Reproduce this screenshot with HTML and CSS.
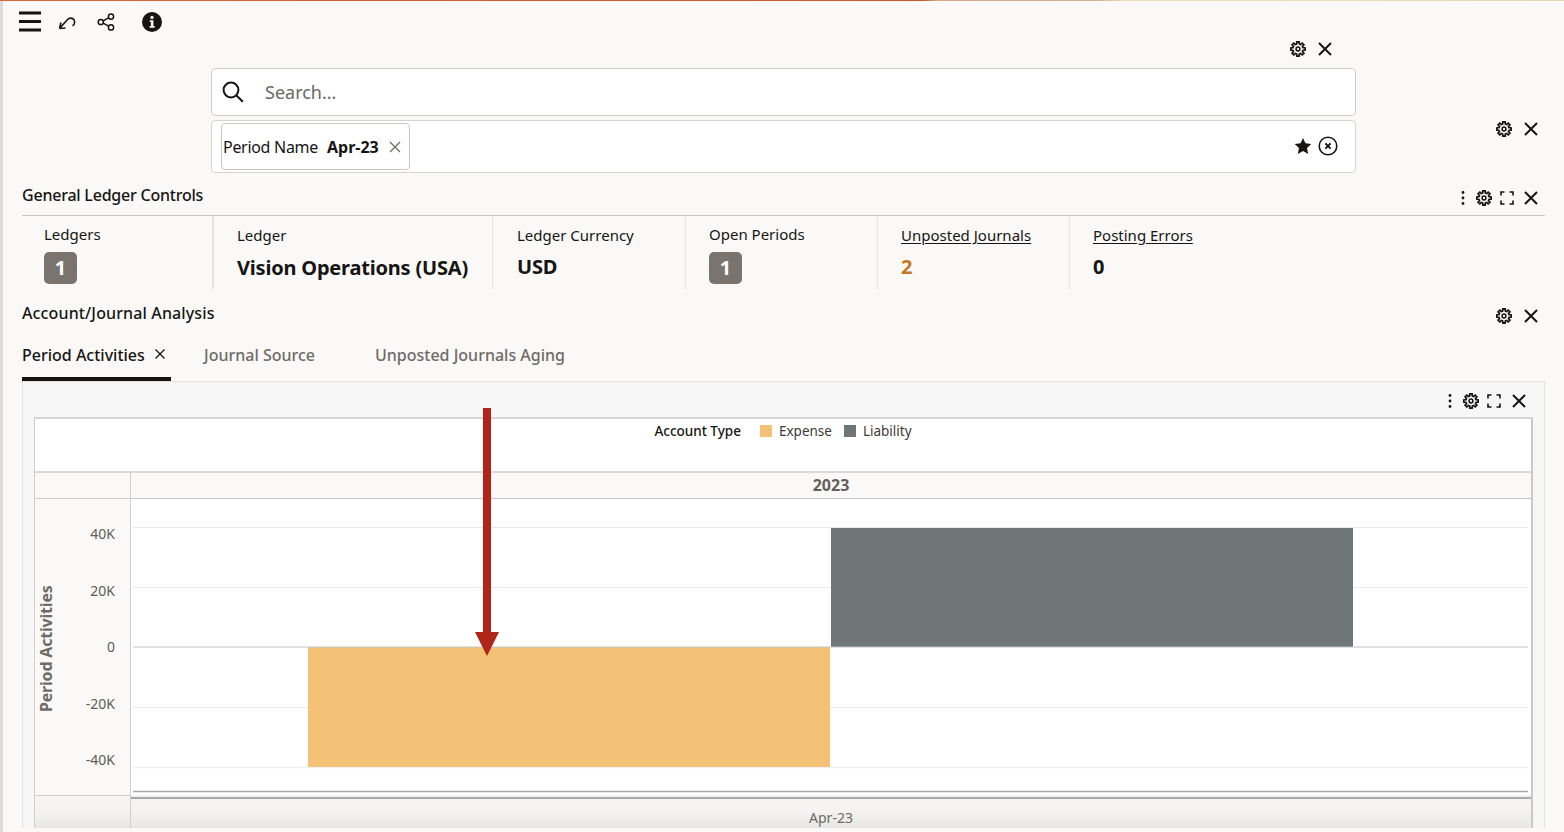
FILE: index.html
```html
<!DOCTYPE html>
<html lang="en">
<head>
<meta charset="utf-8">
<title>General Ledger Controls</title>
<link rel="stylesheet" href="styles.css">
</head>
<body>
<svg class="defs" width="0" height="0" aria-hidden="true">
  <symbol id="i-gear" viewBox="0 0 16 16">
    <path fill="none" stroke="currentColor" stroke-width="1.7" stroke-linejoin="round" d="M6.74 2.95 6.73.81H9.27L9.26 2.95 10.68 3.54 12.19 2.02 13.98 3.81 12.46 5.32 13.05 6.74 15.19 6.73V9.27L13.05 9.26 12.46 10.68 13.98 12.19 12.19 13.98 10.68 12.46 9.26 13.05 9.27 15.19H6.73L6.74 13.05 5.32 12.46 3.81 13.98 2.02 12.19 3.54 10.68 2.95 9.26 .81 9.27V6.73L2.95 6.74 3.54 5.32 2.02 3.81 3.81 2.02 5.32 3.54Z"/>
    <circle cx="8" cy="8" r="1.9" fill="none" stroke="currentColor" stroke-width="1.5"/>
  </symbol>
  <symbol id="i-x" viewBox="0 0 18 18">
    <path fill="none" stroke="currentColor" stroke-width="2" d="M3 3 15 15M15 3 3 15"/>
  </symbol>
  <symbol id="i-kebab" viewBox="0 0 10 16">
    <circle cx="5" cy="2.5" r="1.4" fill="currentColor"/>
    <circle cx="5" cy="8" r="1.4" fill="currentColor"/>
    <circle cx="5" cy="13.5" r="1.4" fill="currentColor"/>
  </symbol>
  <symbol id="i-expand" viewBox="0 0 14 14">
    <path fill="none" stroke="currentColor" stroke-width="1.6" d="M1 4.5V1H4.5M9.5 1H13V4.5M13 9.5V13H9.5M4.5 13H1V9.5"/>
  </symbol>
</svg>

<div class="page">
  <div class="stripe"></div>

  <div class="toolbar">
    <svg class="ic-menu" viewBox="0 0 22 21"><path fill="none" stroke="currentColor" stroke-width="3" d="M0 2H22M0 10.5H22M0 19H22"/></svg>
    <svg class="ic-undo" viewBox="0 0 18 18"><path fill="none" stroke="currentColor" stroke-width="1.6" d="M1.5 15.5 3 9.5M1.5 15.5 7.5 15M2 15 9.5 6.5C11.5 4.5 14.5 4.8 16 6.8 17.2 8.8 16.6 11.6 14.5 12.8"/></svg>
    <svg class="ic-share" viewBox="0 0 18 18"><g fill="none" stroke="currentColor" stroke-width="1.5"><circle cx="3.8" cy="9" r="2.6"/><circle cx="14" cy="3.6" r="2.6"/><circle cx="14" cy="14.4" r="2.6"/><path d="M6.2 7.8 11.6 4.9M6.2 10.2 11.6 13.1"/></g></svg>
    <svg class="ic-info" viewBox="0 0 20 20"><circle cx="10" cy="10" r="10" fill="currentColor"/><circle cx="10" cy="5.4" r="1.7" fill="#faf9f8"/><path fill="#faf9f8" d="M7.8 8.3H11.4V14H12.6V15.8H7.6V14H8.9V10.1H7.8Z"/></svg>
  </div>

  <section class="search-section">
    <div class="search-col">
      <div class="tools tools-top">
        <svg class="ic-gear"><use href="#i-gear"/></svg>
        <svg class="ic-x"><use href="#i-x"/></svg>
      </div>
      <div class="search-box">
        <svg class="ic-search" viewBox="0 0 22 22"><g fill="none" stroke="currentColor" stroke-width="2"><circle cx="9" cy="9" r="7.4"/><path d="M14.3 14.3 20.8 20.8"/></g></svg>
        <span class="placeholder">Search...</span>
      </div>
      <div class="filter-box">
        <div class="chip">
          <span class="chip-name">Period Name</span>
          <b class="chip-value">Apr-23</b>
          <svg class="ic-chip-x" viewBox="0 0 12 12"><path fill="none" stroke="currentColor" stroke-width="1.3" d="M1 1 11 11M11 1 1 11"/></svg>
        </div>
        <div class="filter-actions">
          <svg class="ic-star" viewBox="0 0 18 18"><path fill="currentColor" d="M9 .9 11.5 6.3 17.3 7 13 11 14.2 16.9 9 13.9 3.8 16.9 5 11 .7 7 6.5 6.3Z"/></svg>
          <svg class="ic-clear" viewBox="0 0 20 20"><g fill="none" stroke="currentColor"><circle cx="10" cy="10" r="8.8" stroke-width="1.6"/><path stroke-width="2" d="M7.4 7.4 12.6 12.6M12.6 7.4 7.4 12.6"/></g></svg>
        </div>
      </div>
    </div>
    <div class="tools tools-side">
      <svg class="ic-gear"><use href="#i-gear"/></svg>
      <svg class="ic-x"><use href="#i-x"/></svg>
    </div>
  </section>

  <header class="section-head gl-head">
    <h2 class="section-title">General Ledger Controls</h2>
    <div class="tools">
      <svg class="ic-kebab"><use href="#i-kebab"/></svg>
      <svg class="ic-gear"><use href="#i-gear"/></svg>
      <svg class="ic-expand"><use href="#i-expand"/></svg>
      <svg class="ic-x"><use href="#i-x"/></svg>
    </div>
  </header>

  <div class="metrics">
    <div class="metric metric-first">
      <div class="metric-label label-high">Ledgers</div>
      <div class="badge">1</div>
    </div>
    <div class="metric metric-ledger">
      <div class="metric-label">Ledger</div>
      <div class="metric-value">Vision Operations (USA)</div>
    </div>
    <div class="metric metric-wide">
      <div class="metric-label">Ledger Currency</div>
      <div class="metric-value">USD</div>
    </div>
    <div class="metric metric-mid">
      <div class="metric-label label-high">Open Periods</div>
      <div class="badge">1</div>
    </div>
    <div class="metric metric-mid">
      <div class="metric-label link">Unposted Journals</div>
      <div class="metric-value value-warn">2</div>
    </div>
    <div class="metric metric-last">
      <div class="metric-label link">Posting Errors</div>
      <div class="metric-value">0</div>
    </div>
  </div>

  <header class="section-head account-head">
    <h2 class="section-title">Account/Journal Analysis</h2>
    <div class="tools">
      <svg class="ic-gear"><use href="#i-gear"/></svg>
      <svg class="ic-x"><use href="#i-x"/></svg>
    </div>
  </header>

  <nav class="tabs">
    <div class="tab tab-active">
      <span>Period Activities</span>
      <svg class="ic-tab-x" viewBox="0 0 12 12"><path fill="none" stroke="currentColor" stroke-width="1.3" d="M1.5 1.5 10.5 10.5M10.5 1.5 1.5 10.5"/></svg>
    </div>
    <div class="tab tab-source">Journal Source</div>
    <div class="tab tab-aging">Unposted Journals Aging</div>
  </nav>

  <section class="panel">
    <div class="panel-tools">
      <div class="tools">
        <svg class="ic-kebab"><use href="#i-kebab"/></svg>
        <svg class="ic-gear"><use href="#i-gear"/></svg>
        <svg class="ic-expand"><use href="#i-expand"/></svg>
        <svg class="ic-x"><use href="#i-x"/></svg>
      </div>
    </div>
    <div class="frame">
      <div class="legend">
        <b class="legend-title">Account Type</b>
        <i class="swatch swatch-expense"></i><span class="legend-item">Expense</span>
        <i class="swatch swatch-liability"></i><span class="legend-item">Liability</span>
      </div>
      <div class="chart-grid">
        <div class="corner"></div>
        <div class="year">2023</div>
        <div class="y-axis">
          <div class="y-title">Period Activities</div>
          <div class="y-labels">
            <span>40K</span><span>20K</span><span>0</span><span>-20K</span><span>-40K</span>
          </div>
        </div>
        <svg class="plot" viewBox="0 0 1400 296" width="1400" height="296">
          <g stroke="#e9e8e6" stroke-width="1">
            <path d="M2 28.5H1397M2 88.5H1397M2 208.5H1397"/>
            <path stroke="#efeef4" stroke-width="1.5" d="M2 268.5H1397"/>
          </g>
          <rect x="700" y="29" width="522" height="119" fill="#6f7678"/>
          <rect x="177" y="148" width="522" height="120" fill="#f3c277"/>
          <path stroke="#c4c4c4" stroke-width="1" d="M2 148H1397"/>
          <path stroke="#a8a8a6" stroke-width="1.5" d="M2 292.5H1397"/>
        </svg>
        <div class="foot-left"></div>
        <div class="foot-right"><span>Apr-23</span></div>
      </div>
    </div>
  </section>

  <svg class="arrow" viewBox="0 0 24 248" width="24" height="248"><path fill="#b0251a" d="M8 0H16V224H24L12 248 0 224H8Z"/></svg>
</div>
</body>
</html>
```

FILE: styles.css
```css
* { box-sizing: border-box; }

html, body {
  margin: 0;
  padding: 0;
  height: 100%;
  overflow: hidden;
}

body {
  background: #fbfaf8;
  color: #161513;
  font-family: "Noto Sans", "Liberation Sans", sans-serif;
  font-size: 15px;
}

.defs { position: absolute; }

svg { display: block; flex: none; }

.page {
  position: relative;
  height: 832px;
  padding: 0 19px 4px 22px;
  display: flex;
  flex-direction: column;
  background: #faf9f8;
  box-shadow: inset 3px 0 0 #dcdcdc;
  overflow: hidden;
}

.stripe {
  flex: none;
  height: 1px;
  margin: 0 -19px 0 -22px;
  background: linear-gradient(90deg, #d9673a 0%, #c9582e 59%, #d8a88e 60%, #d6ad90 70%, #eee0b8 72%, #e6d8ae 100%);
}

/* top toolbar */
.toolbar {
  flex: none;
  height: 39px;
  margin-left: -3px;
  display: flex;
  align-items: center;
  position: relative;
  top: 1px;
}
.ic-menu { width: 22px; height: 21px; }
.ic-undo { width: 18px; height: 18px; margin-left: 17px; }
.ic-share { width: 18px; height: 18px; margin-left: 21px; }
.ic-info { width: 20px; height: 20px; margin-left: 27px; }

/* shared tool icons */
.tools {
  display: flex;
  align-items: center;
  justify-content: flex-end;
  gap: 8px;
}
.ic-gear { width: 16px; height: 16px; }
.ic-x { width: 18px; height: 18px; margin-left: 2px; }
.ic-kebab { width: 10px; height: 16px; }
.ic-expand { width: 14px; height: 14px; }
.gl-head .ic-x { margin-left: 0; }
.panel-tools .ic-x { margin-left: 1px; }

/* search */
.search-section {
  flex: none;
  height: 133px;
  display: flex;
  margin-left: 189px;
}
.search-col {
  flex: none;
  width: 1145px;
  display: flex;
  flex-direction: column;
}
.tools-top {
  height: 18px;
  margin-bottom: 10px;
  padding-right: 22px;
}
.search-box {
  height: 48px;
  background: #fff;
  border: 1px solid #cfcdca;
  border-radius: 4px;
  display: flex;
  align-items: center;
  padding-left: 10px;
}
.ic-search { width: 22px; height: 22px; }
.placeholder {
  margin-left: 21px;
  font-size: 18px;
  color: #6b6763;
}
.filter-box {
  height: 53px;
  margin-top: 4px;
  background: #fff;
  border: 1px solid #d6d4d1;
  border-radius: 4px;
  display: flex;
  align-items: center;
  justify-content: space-between;
  padding: 0 17px 0 9px;
}
.chip {
  width: 189px;
  height: 47px;
  border: 1px solid #c9c7c4;
  border-radius: 4px;
  display: flex;
  align-items: center;
  padding-left: 1px;
  font-size: 16px;
}
.chip-name { letter-spacing: -0.3px; }
.chip-value { margin-left: 9px; font-weight: 700; }
.ic-chip-x { width: 12px; height: 12px; margin-left: 10px; color: #6f6b67; }
.filter-actions { display: flex; align-items: center; gap: 6px; margin-top: -2px; }
.ic-star { width: 18px; height: 18px; }
.ic-clear { width: 20px; height: 20px; }
.tools-side {
  flex: 1;
  height: 18px;
  margin-top: 80px;
  padding-right: 5px;
}

/* section heads */
.section-head {
  flex: none;
  display: flex;
  align-items: center;
  justify-content: space-between;
  padding-right: 5px;
}
.section-title {
  margin: 0;
  font-size: 16px;
  font-weight: 500;
  line-height: 22px;
}
.gl-head {
  height: 43px;
  padding-top: 8px;
  border-bottom: 1px solid #c9c7c4;
}
.gl-head .section-title { position: relative; top: -3px; letter-spacing: -0.22px; }
.account-head {
  height: 46px;
  padding-top: 7px;
}
.account-head .section-title { position: relative; top: -3px; letter-spacing: 0.13px; }

/* metrics */
.metrics {
  flex: none;
  height: 73px;
  display: flex;
}
.metric {
  flex: none;
  width: 192px;
  padding: 9px 0 0 23px;
  border-right: 1px solid #e4e3e1;
}
.metric-first { width: 192px; padding-left: 22px; border-right-width: 2px; }
.metric-ledger { width: 279px; }
.metric-wide { width: 193px; padding-left: 24px; }
.metric-mid { width: 192px; }
.metric-last { width: auto; border-right: 0; }
.metric-label {
  font-size: 15px;
  line-height: 20px;
  height: 20px;
}
.label-high { margin-top: -1px; }
.link { text-decoration: underline; text-underline-offset: 2px; }
.metric-value {
  margin-top: 9px;
  font-size: 20px;
  line-height: 28px;
  font-weight: 700;
  letter-spacing: -0.2px;
}
.metric-wide .metric-value,
.metric-mid .metric-value,
.metric-last .metric-value { margin-top: 8px; }
.value-warn { color: #c37a1e; }
.badge {
  width: 33px;
  height: 32px;
  margin-top: 8px;
  border-radius: 5px;
  background: #7a736e;
  color: #fff;
  font-size: 20px;
  font-weight: 700;
  line-height: 32px;
  text-align: center;
}

/* tabs */
.tabs {
  flex: none;
  height: 46px;
  display: flex;
  font-size: 16px;
  font-weight: 500;
  color: #6f6b67;
}
.tab { height: 46px; line-height: 40px; }
.tab-active {
  width: 149px;
  color: #161513;
  border-bottom: 4px solid #161513;
  display: flex;
  align-items: center;
  gap: 9px;
  white-space: nowrap;
}
.tab-active span { line-height: 40px; position: relative; top: -1px; }
.ic-tab-x { width: 12px; height: 12px; position: relative; top: -2px; }
.tab-source { margin-left: 33px; }
.tab-aging { margin-left: 60px; }

/* panel */
.panel {
  flex: 1;
  min-height: 0;
  display: flex;
  flex-direction: column;
  background: #f7f7f7;
  border: 1px solid #e2e2e2;
  border-bottom: 0;
  padding: 0 11px 0 11px;
}
.panel-tools {
  flex: none;
  height: 35px;
  display: flex;
  align-items: center;
  justify-content: flex-end;
  padding-right: 5px;
  padding-top: 3px;
}
.frame {
  flex: 1;
  min-height: 0;
  background: #fff;
  border-top: 2px solid #d6d6d6;
  border-left: 1px solid #cfcfcf;
  border-right: 2px solid #c9c9c9;
  display: flex;
  flex-direction: column;
}
.legend {
  flex: none;
  height: 52px;
  padding-top: 2px;
  display: flex;
  justify-content: center;
  align-items: flex-start;
  font-size: 13.5px;
  line-height: 20px;
}
.legend-title { font-weight: 500; margin-right: 19px; }
.swatch { width: 12px; height: 12px; margin-top: 4px; }
.swatch-expense { background: #f3c277; }
.swatch-liability { background: #6f7678; }
.legend-item { margin: 0 12px 0 7px; color: #3d3a37; }
.legend-item:last-child { margin-right: 0; }

.chart-grid {
  flex: 1;
  min-height: 0;
  display: grid;
  grid-template-columns: 96px 1fr;
  grid-template-rows: 26px 296px 1fr;
  border-top: 2px solid #d9d9d9;
}
.corner {
  background: #faf9f8;
  border-right: 1px solid #cfcfcf;
  border-bottom: 1px solid #cfcfcf;
}
.year {
  background: #faf9f8;
  border-bottom: 1px solid #c4c4c4;
  text-align: center;
  font-size: 16px;
  font-weight: 700;
  line-height: 24px;
  color: #665f5b;
}
.y-axis {
  background: #faf9f8;
  border-right: 1px solid #cfcfcf;
  display: flex;
}
.y-title {
  width: 23px;
  padding-bottom: 4px;
  writing-mode: vertical-rl;
  transform: rotate(180deg);
  text-align: center;
  font-size: 16px;
  font-weight: 700;
  line-height: 23px;
  color: #6f6b67;
  letter-spacing: -0.2px;
}
.y-labels {
  flex: 1;
  padding: 25px 15px 0 0;
  display: flex;
  flex-direction: column;
  align-items: flex-end;
  gap: 36.5px;
  font-size: 14px;
  line-height: 20px;
  color: #5f5b57;
}
.plot { background: #fff; }
.foot-left {
  border-top: 1px solid #cfcfcf;
  border-right: 1px solid #cfcfcf;
  background: linear-gradient(180deg, #f6f5f3 0%, #f4f3f1 50%, #e7e7e6 100%);
}
.foot-right {
  background: linear-gradient(180deg, #f6f5f3 0%, #f4f3f1 50%, #e7e7e6 100%);
  text-align: center;
  font-size: 14px;
  color: #6f6b67;
  box-shadow: inset 0 2px 0 #f0f0f0, inset 0 4px 0 #a8a8a6;
  line-height: 18px;
  padding-top: 14px;
}

/* annotation */
.arrow {
  position: absolute;
  left: 475px;
  top: 408px;
}
```
